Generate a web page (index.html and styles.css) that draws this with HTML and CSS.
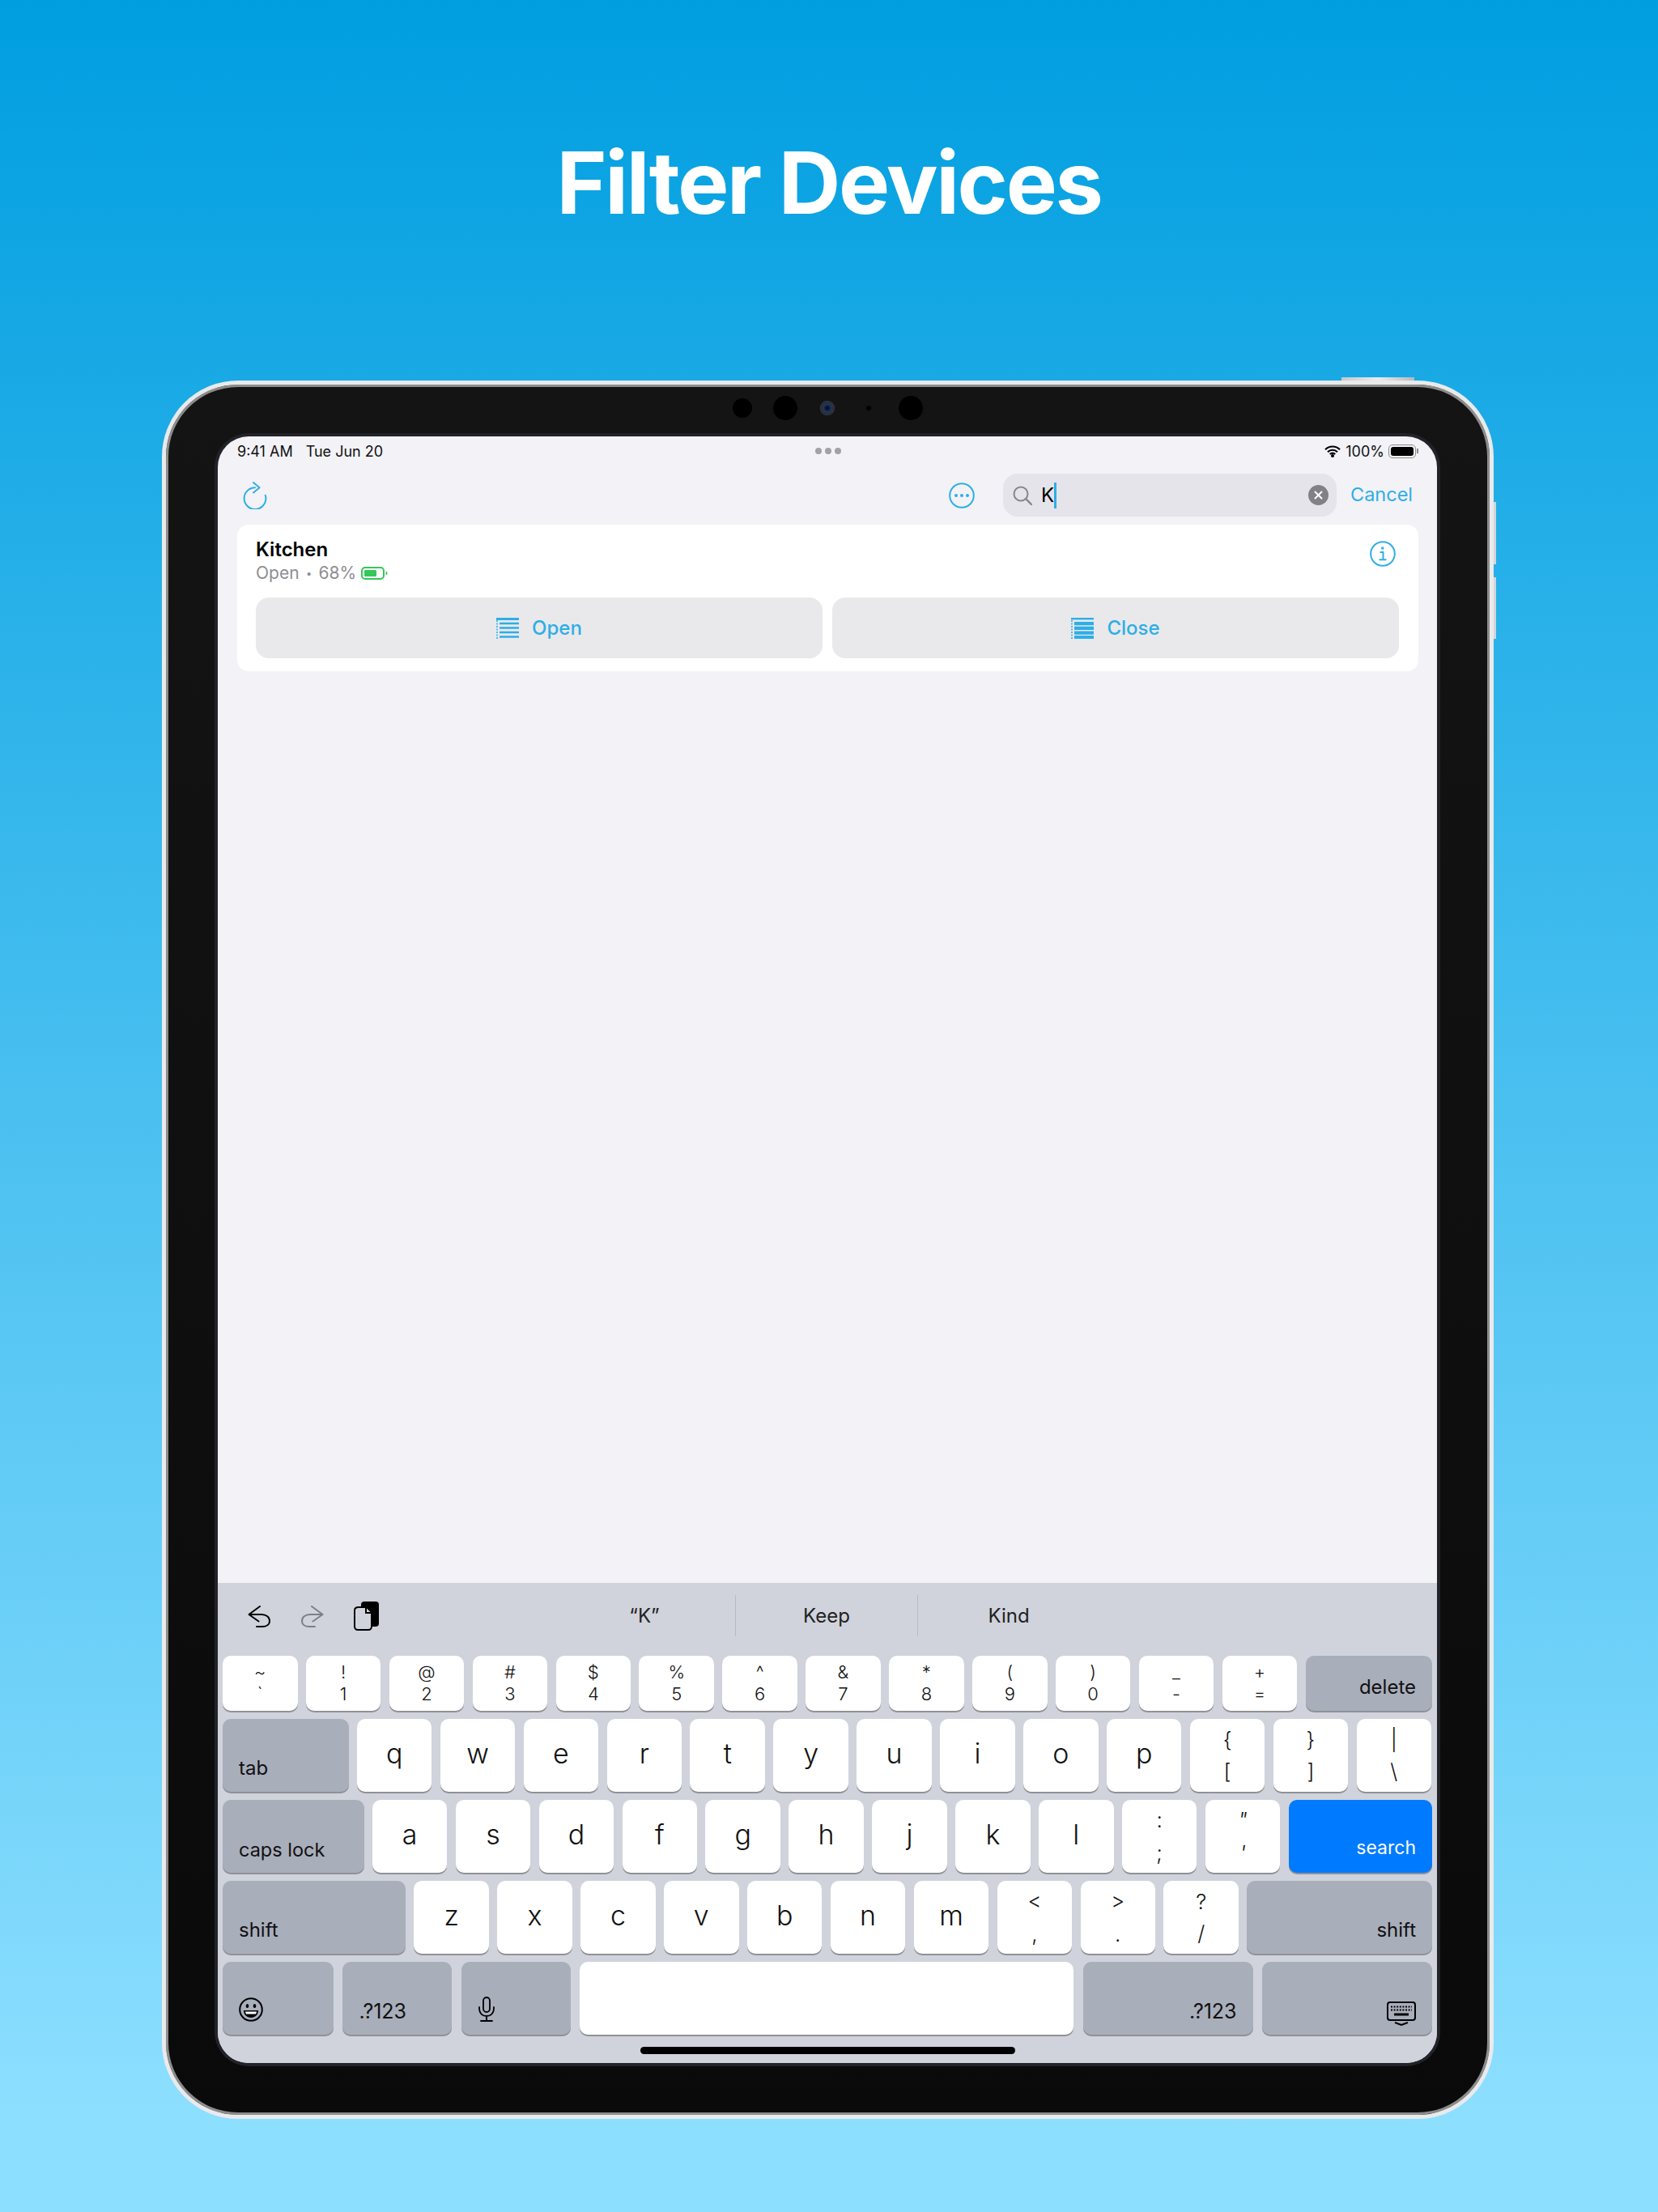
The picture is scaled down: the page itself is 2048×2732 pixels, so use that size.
FILE: index.html
```html
<!DOCTYPE html>
<html lang="en">
<head>
    <meta charset="UTF-8">
    <title>Filter Devices</title>
    <link rel="stylesheet" href="styles.css">
</head>
<body>
    <h1 class="hero">Filter Devices</h1>

    <div class="device">
        <span class="side-btn top-btn"></span>
        <span class="side-btn vol-up"></span>
        <span class="side-btn vol-down"></span>

        <div class="cams">
            <span class="cam cam-a"></span>
            <span class="cam cam-b"></span>
            <span class="cam lens"></span>
            <span class="cam pin"></span>
            <span class="cam cam-b"></span>
        </div>

        <div class="screen">
            <div class="status">
                <div class="status-left"><span>9:41 AM</span><span>Tue Jun 20</span></div>
                <div class="status-dots"><i></i><i></i><i></i></div>
                <div class="status-right">
                    <svg class="wifi" viewBox="0 0 20 15"><path d="M1 5.2a12.8 12.8 0 0 1 18 0M4 8.2a8.6 8.6 0 0 1 12 0M6.8 11a4.4 4.4 0 0 1 6.4 0" fill="none" stroke="#000" stroke-width="2.2"/><circle cx="10" cy="13" r="2" fill="#000"/></svg>
                    <span>100%</span>
                    <span class="batt"><i></i></span>
                    <span class="batt-nub"></span>
                </div>
            </div>

            <div class="nav">
                <svg class="ico-refresh" viewBox="0 0 30 34"><path d="M15 7.2A13.4 13.4 0 1 0 28.4 20.600c0-1.400-.2-2.600-.6-3.800M13 1l7.600 6.200L13 13.400" fill="none" stroke="#2eaee8" stroke-width="2" stroke-linecap="round" stroke-linejoin="round"/></svg>
                <svg class="ico-more" viewBox="0 0 32 32"><circle cx="16" cy="16" r="14.800" fill="none" stroke="#2eaee8" stroke-width="2"/><circle cx="9" cy="16" r="2" fill="#2eaee8"/><circle cx="16" cy="16" r="2" fill="#2eaee8"/><circle cx="23" cy="16" r="2" fill="#2eaee8"/></svg>
                <div class="search">
                    <svg class="ico-search" viewBox="0 0 24 24"><circle cx="10" cy="10" r="8.500" fill="none" stroke="#86868b" stroke-width="2"/><path d="M16 16l7 7" stroke="#86868b" stroke-width="2.400" stroke-linecap="round"/></svg>
                    <span class="search-val">K</span><span class="caret"></span>
                    <svg class="ico-clear" viewBox="0 0 25 25"><circle cx="12.500" cy="12.500" r="12.500" fill="#818186"/><path d="M8.500 8.500l8 8M16.500 8.500l-8 8" stroke="#fff" stroke-width="2" stroke-linecap="round"/></svg>
                </div>
                <span class="cancel">Cancel</span>
            </div>

            <div class="card">
                <div class="card-top">
                    <div>
                        <div class="dev-name">Kitchen</div>
                        <div class="dev-sub">
                            <span>Open<span class="dot">•</span>68%</span>
                            <svg class="ico-batt" viewBox="0 0 33 16"><rect x="1" y="1" width="27" height="14" rx="4" fill="none" stroke="#34c759" stroke-width="2"/><rect x="4" y="4" width="15" height="8" rx="1.500" fill="#34c759"/><path d="M30.500 5.500c1.500.5 2 1.500 2 2.500s-.5 2-2 2.500z" fill="#34c759"/></svg>
                        </div>
                    </div>
                    <svg class="ico-info" viewBox="0 0 32 32"><circle cx="16" cy="16" r="14.800" fill="none" stroke="#2eaee8" stroke-width="2"/><circle cx="15.800" cy="9" r="1.800" fill="#2eaee8"/><path d="M12.500 14h4v9M11.500 23.200h9" fill="none" stroke="#2eaee8" stroke-width="2"/></svg>
                </div>
                <div class="card-btns">
                    <div class="act-btn">
                        <svg class="ico-blind" viewBox="0 0 28 26"><path d="M0 1.500h28" stroke="#2eaee8" stroke-width="3"/><path d="M4 7h24M4 12.500h24M4 18h24M4 23.500h24" stroke="#2eaee8" stroke-width="2.600"/><path d="M1 3v23" stroke="#2eaee8" stroke-width="1.600" stroke-dasharray="2 1.500"/></svg>
                        <span>Open</span>
                    </div>
                    <div class="act-btn">
                        <svg class="ico-blind" viewBox="0 0 28 26"><path d="M0 1.200h28" stroke="#2eaee8" stroke-width="2.400"/><path d="M4 5h24v4.200H4zM4 10.800h24V15H4zM4 16.600h24v4.200H4zM4 22h24v4H4z" fill="#2eaee8"/><path d="M1 3v23" stroke="#2eaee8" stroke-width="1.600" stroke-dasharray="2 1.500"/></svg>
                        <span>Close</span>
                    </div>
                </div>
            </div>

            <div class="fill"></div>

            <div class="kb">
                <div class="kb-bar">
                    <svg class="ico-undo" viewBox="0 0 28 27"><path d="M15 1L1.500 11l12 8.500M1.500 11H17c6 0 10 3.500 10 8s-4 7-9 7h-7" fill="none" stroke="#000" stroke-width="2" stroke-linecap="round" stroke-linejoin="round"/></svg>
                    <svg class="ico-redo" viewBox="0 0 28 27"><path d="M13 1l13.500 10-12 8.500M26.500 11H11C5 11 1 14.500 1 19s4 7 9 7h7" fill="none" stroke="#7d7f85" stroke-width="2" stroke-linecap="round" stroke-linejoin="round"/></svg>
                    <svg class="ico-paste" viewBox="0 0 31 36"><rect x="9" y="0" width="22" height="31" rx="4" fill="#000"/><path d="M6 7h10l6 6v18c0 2-1.500 4-4 4H5c-2.500 0-4-2-4-4V11c0-2.500 2-4 5-4z" fill="#d0d3dc" stroke="#000" stroke-width="2"/><path d="M15 8v6h7" fill="none" stroke="#000" stroke-width="2"/></svg>
                    <div class="suggest">
                        <span class="sug">“K”</span>
                        <span class="sug-sep"></span>
                        <span class="sug">Keep</span>
                        <span class="sug-sep"></span>
                        <span class="sug">Kind</span>
                    </div>
                </div>

                <div class="row row-num">
                    <div class="key dual"><span>~</span><span>`</span></div>
                    <div class="key dual"><span>!</span><span>1</span></div>
                    <div class="key dual"><span>@</span><span>2</span></div>
                    <div class="key dual"><span>#</span><span>3</span></div>
                    <div class="key dual"><span>$</span><span>4</span></div>
                    <div class="key dual"><span>%</span><span>5</span></div>
                    <div class="key dual"><span>^</span><span>6</span></div>
                    <div class="key dual"><span>&amp;</span><span>7</span></div>
                    <div class="key dual"><span>*</span><span>8</span></div>
                    <div class="key dual"><span>(</span><span>9</span></div>
                    <div class="key dual"><span>)</span><span>0</span></div>
                    <div class="key dual"><span>_</span><span>-</span></div>
                    <div class="key dual"><span>+</span><span>=</span></div>
                    <div class="key fn right grow">delete</div>
                </div>

                <div class="row">
                    <div class="key fn w-tab">tab</div>
                    <div class="key">q</div>
                    <div class="key">w</div>
                    <div class="key">e</div>
                    <div class="key">r</div>
                    <div class="key">t</div>
                    <div class="key">y</div>
                    <div class="key">u</div>
                    <div class="key">i</div>
                    <div class="key">o</div>
                    <div class="key">p</div>
                    <div class="key dual gap-39"><span>{</span><span>[</span></div>
                    <div class="key dual gap-39"><span>}</span><span>]</span></div>
                    <div class="key dual gap-39"><span>|</span><span>\</span></div>
                </div>

                <div class="row">
                    <div class="key fn w-caps">caps lock</div>
                    <div class="key">a</div>
                    <div class="key">s</div>
                    <div class="key">d</div>
                    <div class="key">f</div>
                    <div class="key">g</div>
                    <div class="key">h</div>
                    <div class="key">j</div>
                    <div class="key">k</div>
                    <div class="key">l</div>
                    <div class="key dual gap-41"><span>:</span><span>;</span></div>
                    <div class="key dual gap-41 slant"><span>"</span><span>'</span></div>
                    <div class="key fn right grow go">search</div>
                </div>

                <div class="row">
                    <div class="key fn w-shift">shift</div>
                    <div class="key">z</div>
                    <div class="key">x</div>
                    <div class="key">c</div>
                    <div class="key">v</div>
                    <div class="key">b</div>
                    <div class="key">n</div>
                    <div class="key">m</div>
                    <div class="key dual gap-41"><span>&lt;</span><span>,</span></div>
                    <div class="key dual gap-41"><span>&gt;</span><span>.</span></div>
                    <div class="key dual gap-39"><span>?</span><span>/</span></div>
                    <div class="key fn right grow">shift</div>
                </div>

                <div class="row row-last">
                    <div class="key fn w-emoji">
                        <svg class="ico-emoji" viewBox="0 0 30 30"><circle cx="15" cy="15" r="13.800" fill="none" stroke="#000" stroke-width="2"/><ellipse cx="10.500" cy="10.500" rx="1.800" ry="2.600"/><ellipse cx="19.500" cy="10.500" rx="1.800" ry="2.600"/><path d="M6 16h18c0 5.500-4 9-9 9s-9-3.500-9-9z"/><path d="M8 17.500h14c-.3 1.500-.7 2.500-1.200 3H9.200c-.5-.5-.9-1.500-1.200-3z" fill="#fff"/></svg>
                    </div>
                    <div class="key fn w-fn lbl-num">.?123</div>
                    <div class="key fn w-fn">
                        <svg class="ico-mic" viewBox="0 0 22 31"><rect x="7" y="1" width="8" height="18" rx="4" fill="none" stroke="#000" stroke-width="1.800"/><path d="M2 13v2c0 5.500 4 9 9 9s9-3.500 9-9v-2M11 24v6M4 30h14" fill="none" stroke="#000" stroke-width="1.800" stroke-linecap="round"/></svg>
                    </div>
                    <div class="key w-space"></div>
                    <div class="key fn right w-fn2 lbl-num">.?123</div>
                    <div class="key fn right grow">
                        <svg class="ico-kbd" viewBox="0 0 36 30"><rect x="1" y="1" width="34" height="22" rx="3" fill="none" stroke="#000" stroke-width="2"/><path d="M5 6.500h26M5 10.500h26" stroke="#000" stroke-width="2" stroke-dasharray="2 1.600"/><path d="M9 16h18" stroke="#000" stroke-width="3"/><path d="M10 26l8 3 8-3" fill="none" stroke="#000" stroke-width="2"/></svg>
                    </div>
                </div>

                <div class="home-wrap"><span class="home"></span></div>
            </div>
        </div>
    </div>
</body>
</html>
```

FILE: styles.css
```css
* {
    box-sizing: border-box;
}
html, body {
    margin: 0;
    padding: 0;
}
body {
    width: 2048px;
    height: 2732px;
    overflow: hidden;
    background: linear-gradient(180deg, #009ee0 0%, #8ddfff 96%);
    font-family: Inter, "Liberation Sans", sans-serif;
    color: #000;
}
.hero {
    margin: 0;
    height: 470px;
    padding-top: 156px;
    text-align: center;
    color: #fff;
    font-size: 106px;
    line-height: 140px;
    font-weight: 700;
    letter-spacing: -2.3px;
}

/* device frame */
.device {
    position: relative;
    width: 1645px;
    height: 2147px;
    margin-left: 200px;
    padding: 64px 65px 64px 64px;
    border: 5px solid #e9eaec;
    border-radius: 94px;
    background: linear-gradient(180deg, #141414, #0a0a0a);
    box-shadow: inset 0 0 0 3px #8c8c8c;
}
.side-btn {
    position: absolute;
    background: linear-gradient(90deg, #c8c8c8, #ececec 50%, #b8b8b8);
}
.top-btn {
    top: -9px;
    left: 1452px;
    width: 90px;
    height: 4px;
}
.vol-up, .vol-down {
    right: -8px;
    width: 3px;
    background: #d4d6d8;
}
.vol-up {
    top: 145px;
    height: 77px;
}
.vol-down {
    top: 238px;
    height: 76px;
}
.cams {
    position: absolute;
    top: 14px;
    left: 700px;
    display: flex;
    align-items: center;
    height: 30px;
}
.cam {
    display: block;
    border-radius: 50%;
    background: #000;
}
.cam-a {
    width: 24px;
    height: 24px;
    margin-right: 26px;
}
.cam-b {
    width: 30px;
    height: 30px;
}
.lens {
    width: 18px;
    height: 18px;
    margin: 0 39px 0 28px;
    background: radial-gradient(circle, #0a1220 12%, #1f3566 38%, #2a2c32 60%, #5a5c60 85%);
}
.pin {
    width: 6px;
    height: 6px;
    margin-right: 34px;
}

/* screen */
.screen {
    display: flex;
    flex-direction: column;
    width: 1506px;
    height: 2009px;
    border-radius: 38px;
    overflow: hidden;
    background: #f2f2f7;
    box-shadow: 0 0 0 4px #22232a;
}
.status {
    display: grid;
    grid-template-columns: 1fr auto 1fr;
    align-items: center;
    height: 36px;
    padding: 0 23px 0 24px;
    font-size: 18px;
    color: #111;
}
.status-left {
    display: flex;
    gap: 16px;
}
.status-dots {
    display: flex;
    gap: 4px;
}
.status-dots i {
    width: 8px;
    height: 8px;
    border-radius: 50%;
    background: #a2a2a6;
}
.status-right {
    display: flex;
    align-items: center;
    justify-content: flex-end;
    gap: 6px;
}
.wifi {
    width: 20px;
    height: 15px;
}
.batt {
    display: block;
    width: 34px;
    height: 17px;
    margin-left: -1px;
    padding: 2px;
    border: 1px solid #8a8a8e;
    border-radius: 5px;
}
.batt i {
    display: block;
    height: 100%;
    border-radius: 3px;
    background: #000;
}
.batt-nub {
    width: 2px;
    height: 6px;
    margin-left: -5px;
    background: #8a8a8e;
}
.nav {
    display: flex;
    align-items: center;
    height: 53px;
    margin-top: 10px;
    padding-left: 31px;
}
.ico-refresh {
    width: 30px;
    height: 34px;
    margin-right: 842px;
}
.ico-more {
    width: 32px;
    height: 32px;
    margin-right: 35px;
}
.search {
    display: flex;
    align-items: center;
    width: 412px;
    height: 53px;
    padding: 0 10px 0 12px;
    border-radius: 18px;
    background: #e4e4ea;
    font-size: 24px;
}
.ico-search {
    width: 24px;
    height: 24px;
    margin-right: 11px;
}
.search-val {
    line-height: 32px;
}
.caret {
    width: 3px;
    height: 32px;
    background: #2eaee8;
}
.ico-clear {
    width: 25px;
    height: 25px;
    margin-left: auto;
}
.cancel {
    margin-left: 17px;
    margin-top: -2px;
    font-size: 23.5px;
    color: #2eaee8;
}
.card {
    height: 181px;
    margin: 10px 23px 0 24px;
    padding: 16px 24px 0 23px;
    border-radius: 14px;
    background: #fff;
}
.card-top {
    display: flex;
    justify-content: space-between;
    height: 74px;
}
.dev-name {
    font-size: 24px;
    line-height: 30px;
    font-weight: 600;
}
.dev-sub {
    display: flex;
    align-items: center;
    gap: 6px;
    font-size: 21px;
    line-height: 28px;
    color: #8e8e93;
}
.dot {
    display: inline-block;
    width: 24px;
    font-size: 13px;
    text-align: center;
    vertical-align: 2px;
}
.ico-batt {
    width: 33px;
    height: 16px;
}
.ico-info {
    width: 32px;
    height: 32px;
    margin: 4px 4px 0 0;
}
.card-btns {
    display: flex;
    gap: 12px;
}
.act-btn {
    display: flex;
    flex: 1;
    align-items: center;
    justify-content: center;
    gap: 16px;
    height: 75px;
    border-radius: 16px;
    background: #e9e9eb;
    font-size: 24px;
    font-weight: 500;
    color: #2eaee8;
}
.ico-blind {
    width: 28px;
    height: 26px;
}
.fill {
    flex: 1;
}

/* keyboard */
.kb {
    height: 593px;
    padding: 0 6px;
    background: #d0d3dc;
}
.kb-bar {
    position: relative;
    display: flex;
    align-items: center;
    height: 90px;
    padding: 0 0 8px 31px;
}
.ico-undo, .ico-redo {
    width: 28px;
    height: 27px;
}
.ico-undo {
    margin-right: 38px;
}
.ico-redo {
    margin-right: 37px;
}
.ico-paste {
    width: 31px;
    height: 36px;
}
.suggest {
    position: absolute;
    top: 15px;
    left: 409px;
    display: flex;
    align-items: center;
    height: 51px;
    font-size: 24px;
    color: #222;
}
.sug {
    width: 224px;
    text-align: center;
}
.sug-sep {
    width: 1px;
    height: 51px;
    background: #b8bbc4;
}
.row {
    display: flex;
    gap: 10.4px;
    height: 90px;
    margin-bottom: 10px;
}
.row-num {
    height: 68px;
}
.row-last {
    gap: 11.4px;
}
.key {
    display: flex;
    flex: 0 0 92.5px;
    align-items: center;
    justify-content: center;
    padding-bottom: 5px;
    border-radius: 10px;
    background: #fff;
    box-shadow: 0 2px 0 #8f9196;
    font-size: 34px;
    font-weight: 350;
    color: #111;
}
.dual {
    flex-direction: column;
    padding-bottom: 0;
    font-size: 26px;
}
.dual span {
    line-height: 41px;
}
.gap-39 span {
    line-height: 39px;
}
.row-num .dual {
    font-size: 22px;
}
.row-num .dual span {
    line-height: 27px;
}
.slant {
    font-style: italic;
}
.fn {
    align-items: flex-end;
    justify-content: flex-start;
    padding: 0 20px 14px;
    background: #a9aebb;
    font-size: 24px;
    font-weight: 400;
    line-height: 30px;
}
.right {
    justify-content: flex-end;
}
.grow {
    flex: 1;
}
.go {
    padding-bottom: 16px;
    background: #007aff;
    font-size: 23px;
    color: #fff;
}
.lbl-num {
    font-size: 25px;
}
.w-tab {
    flex-basis: 155.5px;
}
.w-caps {
    flex-basis: 174.5px;
    padding-bottom: 13px;
    font-size: 23.5px;
}
.w-shift {
    flex-basis: 226px;
}
.w-emoji {
    flex-basis: 137px;
}
.w-fn {
    flex-basis: 135px;
}
.w-space {
    flex-basis: 610px;
}
.w-fn2 {
    flex-basis: 210px;
}
.ico-emoji {
    width: 30px;
    height: 30px;
    margin-bottom: 2px;
}
.ico-mic {
    width: 22px;
    height: 31px;
    margin-bottom: 2px;
}
.ico-kbd {
    width: 36px;
    height: 30px;
    margin-bottom: -3px;
}
.home-wrap {
    display: flex;
    justify-content: center;
    padding-top: 5px;
}
.home {
    width: 463px;
    height: 9px;
    border-radius: 5px;
    background: #000;
}
```
